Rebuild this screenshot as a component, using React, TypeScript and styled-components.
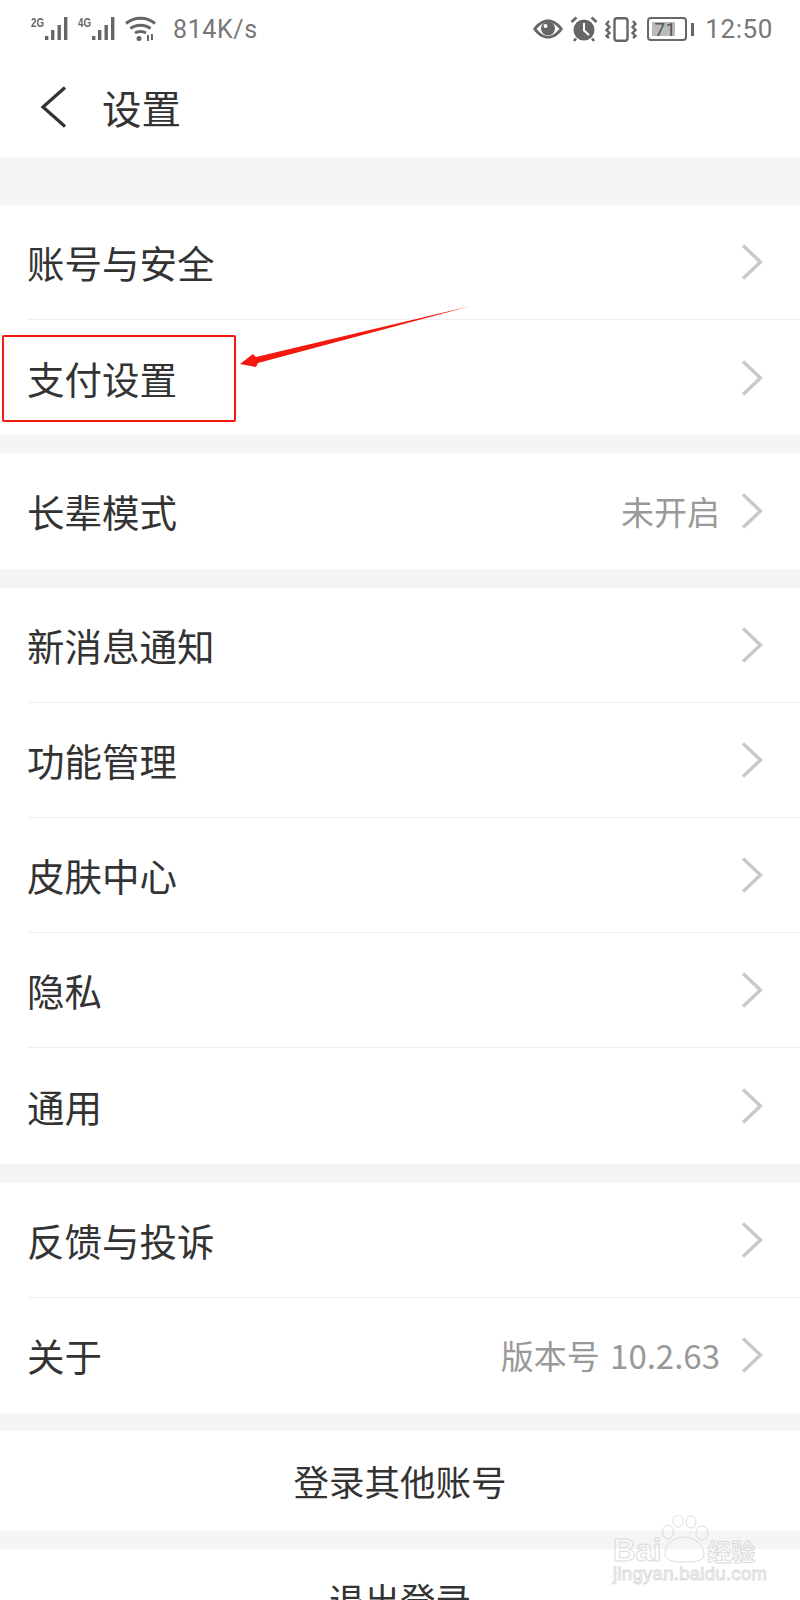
import styled, { createGlobalStyle } from 'styled-components';

const FONT = '"Noto Sans CJK SC", "Noto Sans", sans-serif';

const GlobalStyle = createGlobalStyle`
  html, body {
    margin: 0;
    padding: 0;
    background: #fff;
  }
`;

const Signal = ({ label }: { label: string }) => (
  <svg width="40" height="26" viewBox="0 0 40 26">
    <text x="0" y="11" fontFamily="Liberation Sans" fontWeight="700" fontSize="12" textLength="13" lengthAdjust="spacingAndGlyphs" fill="#666">
      {label}
    </text>
    <rect x="14" y="20" width="3.4" height="4" fill="#666" />
    <rect x="20" y="14" width="3.4" height="10" fill="#666" />
    <rect x="26.500" y="9" width="3.4" height="15" fill="#666" />
    <rect x="33" y="1" width="3.4" height="23" fill="#666" />
  </svg>
);

const Wifi = () => (
  <svg width="32" height="26" viewBox="0 0 32 26" fill="none" stroke="#666" strokeWidth="3">
    <path d="M1 7.500C9 0.500 22 0.500 30 7.500" />
    <path d="M5.500 12.500C11 8 20 8 25.500 12.500" />
    <path d="M10 17C13 15 18 15 21 17" />
    <circle cx="14" cy="22.500" r="2.500" fill="#666" stroke="none" />
    <path d="M23 19v6M27 18v6" strokeWidth="2" />
  </svg>
);

const Eye = () => (
  <svg width="30" height="20" viewBox="0 0 30 20">
    <path d="M0 10C5 3 10 .5 15 .5S25 3 30 10C25 17 20 19.500 15 19.500S5 17 0 10Z" fill="#666" />
    <path d="M3.500 10C7.500 5.500 11 3 15 3s7.500 2.500 11.500 7c-4 4.500-7.500 7-11.500 7S7.500 14.500 3.500 10Z" fill="#fff" />
    <circle cx="15" cy="9.500" r="7" fill="#666" />
    <circle cx="12.500" cy="7" r="2" fill="#fff" />
  </svg>
);

const Alarm = () => (
  <svg width="28" height="26" viewBox="0 0 28 26" fill="none">
    <circle cx="14" cy="14" r="10.500" fill="#666" />
    <path d="M14 7v7.500l5 4.500" stroke="#fff" strokeWidth="2" />
    <path d="M1.500 6L6.500 1.500M26.500 6L21.500 1.500M6 22.500L4 25M22 22.500L24 25" stroke="#666" strokeWidth="2.600" />
  </svg>
);

const Vibrate = () => (
  <svg width="32" height="25" viewBox="0 0 32 25" fill="none" stroke="#666" strokeWidth="2.400">
    <rect x="9.500" y="1.200" width="13" height="22.600" rx="2.500" />
    <path d="M4 4l-2.500 3 3 3-3 3 3 3-3 3 2.500 2" />
    <path d="M28 4l2.500 3-3 3 3 3-3 3 3 3-2.500 2" />
  </svg>
);

const Back = () => (
  <svg width="27" height="42" viewBox="0 0 27 42" fill="none" stroke="#333" strokeWidth="3.200">
    <path d="M25 1.500L3 21l22 19.500" />
  </svg>
);

const Chevron = () => (
  <ChevronIcon width="22" height="36" viewBox="0 0 22 36" fill="none" stroke="#c8c8c8" strokeWidth="3.400">
    <path d="M2 1.500L19.500 18 2 34.500" />
  </ChevronIcon>
);

const Row = ({ label, value }: { label: string; value?: string }) => (
  <RowItem>
    <RowLabel>{label}</RowLabel>
    <RowRight>
      {value && <RowValue>{value}</RowValue>}
      <Chevron />
    </RowRight>
  </RowItem>
);

const Page = styled.div`
  position: relative;
  width: 800px;
  height: 1600px;
  overflow: hidden;
  background: #f5f5f5;
  font-family: ${FONT};
  color: #333;
`;

const Top = styled.header`
  height: 159px;
  background: #fff;
  border-bottom: 1px solid #f0f0f0;
  box-sizing: border-box;
`;

const StatusBar = styled.div`
  height: 56px;
  box-sizing: border-box;
  padding: 2px 27px 0 31px;
  display: flex;
  align-items: center;
  justify-content: space-between;
`;

const StatusGroup = styled.div`
  display: flex;
  align-items: center;
  gap: 7px;
`;

const StatusText = styled.span<{ $left?: number; $size?: number }>`
  font-family: Roboto, sans-serif;
  font-size: ${(p) => p.$size ?? 25}px;
  letter-spacing: 0.6px;
  color: #777;
  margin-left: ${(p) => p.$left ?? 0}px;
`;

const Battery = styled.div`
  position: relative;
  width: 40px;
  height: 24px;
  box-sizing: border-box;
  border: 2px solid #666;
  border-radius: 4px;
  margin-left: 3px;
  padding: 3px;
  display: flex;
`;

const BatteryFill = styled.div`
  width: 75%;
  background: #bbb;
`;

const BatteryNumber = styled.span`
  position: absolute;
  inset: 0 4px 0 0;
  display: flex;
  align-items: center;
  justify-content: center;
  font-family: Roboto, sans-serif;
  font-size: 19px;
  color: #555;
`;

const BatteryCap = styled.div`
  width: 3px;
  height: 13px;
  background: #666;
  margin: 0 4px 0 -3px;
`;

const NavBar = styled.div`
  height: 102px;
  box-sizing: border-box;
  padding: 0 0 0 40px;
  display: flex;
  align-items: center;
  gap: 35px;
`;

const Title = styled.h1`
  margin: 0;
  font-size: 39.500px;
  line-height: 50px;
  font-weight: 400;
  color: #333;
`;

const Group = styled.section<{ $gap: number }>`
  margin-top: ${(p) => p.$gap}px;
  background: #fff;
`;

const RowItem = styled.div`
  height: 115.2px;
  margin-left: 27px;
  box-sizing: border-box;
  padding-right: 37px;
  display: flex;
  align-items: center;
  justify-content: space-between;
  border-bottom: 1px solid #efefef;

  &:last-child {
    border-bottom: none;
  }
`;

const RowLabel = styled.span`
  font-size: 37.500px;
  line-height: 50px;
`;

const RowRight = styled.div`
  display: flex;
  align-items: center;
  gap: 21px;
`;

const RowValue = styled.span`
  font-size: 33px;
  line-height: 44px;
  word-spacing: 3px;
  color: #999;
`;

const ChevronIcon = styled.svg`
  display: block;
`;

const ActionButton = styled.div`
  height: 100px;
  display: flex;
  align-items: center;
  justify-content: center;
  font-size: 35.500px;
  color: #333;
`;

const RedBox = styled.div`
  position: absolute;
  left: 2px;
  top: 335px;
  width: 234px;
  height: 87px;
  box-sizing: border-box;
  border: 2px solid #f5180f;
  border-radius: 2px;
`;

const ArrowIcon = styled.svg`
  position: absolute;
  left: 236px;
  top: 300px;
`;

const Watermark = styled.div`
  position: absolute;
  left: 613px;
  top: 1515px;
  width: 150px;
  height: 70px;
  color: transparent;
  -webkit-text-stroke: 1px #dcdcdc;
`;

const WatermarkLine = styled.div`
  position: absolute;
  left: 0;
  top: 22px;
  display: flex;
  align-items: baseline;
  font-family: "Liberation Sans", sans-serif;
  font-weight: 700;
  font-size: 31px;
  line-height: 28px;
`;

const WatermarkCn = styled.span`
  margin-left: 46px;
  font-family: ${FONT};
  font-size: 24px;
`;

const WatermarkUrl = styled.div`
  position: absolute;
  left: 0;
  top: 50px;
  font-family: "Liberation Sans", sans-serif;
  font-size: 18.500px;
  line-height: 18px;
  letter-spacing: 0.3px;
  white-space: nowrap;
`;

const WatermarkPaw = styled.svg`
  position: absolute;
  left: 49px;
  top: 0;
`;

export default function App() {
  return (
    <Page>
      <GlobalStyle />
      <Top>
        <StatusBar>
          <StatusGroup>
            <Signal label="2G" />
            <Signal label="4G" />
            <Wifi />
            <StatusText $left={9}>814K/s</StatusText>
          </StatusGroup>
          <StatusGroup>
            <Eye />
            <Alarm />
            <Vibrate />
            <Battery>
              <BatteryFill />
              <BatteryNumber>71</BatteryNumber>
            </Battery>
            <BatteryCap />
            <StatusText $size={26}>12:50</StatusText>
          </StatusGroup>
        </StatusBar>
        <NavBar>
          <Back />
          <Title>设置</Title>
        </NavBar>
      </Top>

      <Group $gap={46}>
        <Row label="账号与安全" />
        <Row label="支付设置" />
      </Group>
      <Group $gap={18}>
        <Row label="长辈模式" value="未开启" />
      </Group>
      <Group $gap={19}>
        <Row label="新消息通知" />
        <Row label="功能管理" />
        <Row label="皮肤中心" />
        <Row label="隐私" />
        <Row label="通用" />
      </Group>
      <Group $gap={19}>
        <Row label="反馈与投诉" />
        <Row label="关于" value="版本号 10.2.63" />
      </Group>
      <Group $gap={18}>
        <ActionButton>登录其他账号</ActionButton>
      </Group>
      <Group $gap={18}>
        <ActionButton>退出登录</ActionButton>
      </Group>

      <RedBox />
      <ArrowIcon width="236" height="70" viewBox="0 0 236 70">
        <path d="M4 64L17 54L20 57L235 6L22 63L20 67Z" fill="#f5180f" />
      </ArrowIcon>

      <Watermark>
        <WatermarkPaw width="48" height="50" viewBox="0 0 48 50" fill="none" stroke="#dcdcdc" strokeWidth="1">
          <ellipse cx="6" cy="17" rx="5.500" ry="7" />
          <ellipse cx="16" cy="6" rx="5" ry="6" />
          <ellipse cx="29" cy="7" rx="5" ry="6" />
          <ellipse cx="40" cy="18" rx="6" ry="7" />
          <path d="M3 38C3 29 12 22 22 22S42 30 42 39C42 46 35 47 22 47S3 45 3 38Z" />
        </WatermarkPaw>
        <WatermarkLine>
          Bai
          <WatermarkCn>经验</WatermarkCn>
        </WatermarkLine>
        <WatermarkUrl>jingyan.baidu.com</WatermarkUrl>
      </Watermark>
    </Page>
  );
}
